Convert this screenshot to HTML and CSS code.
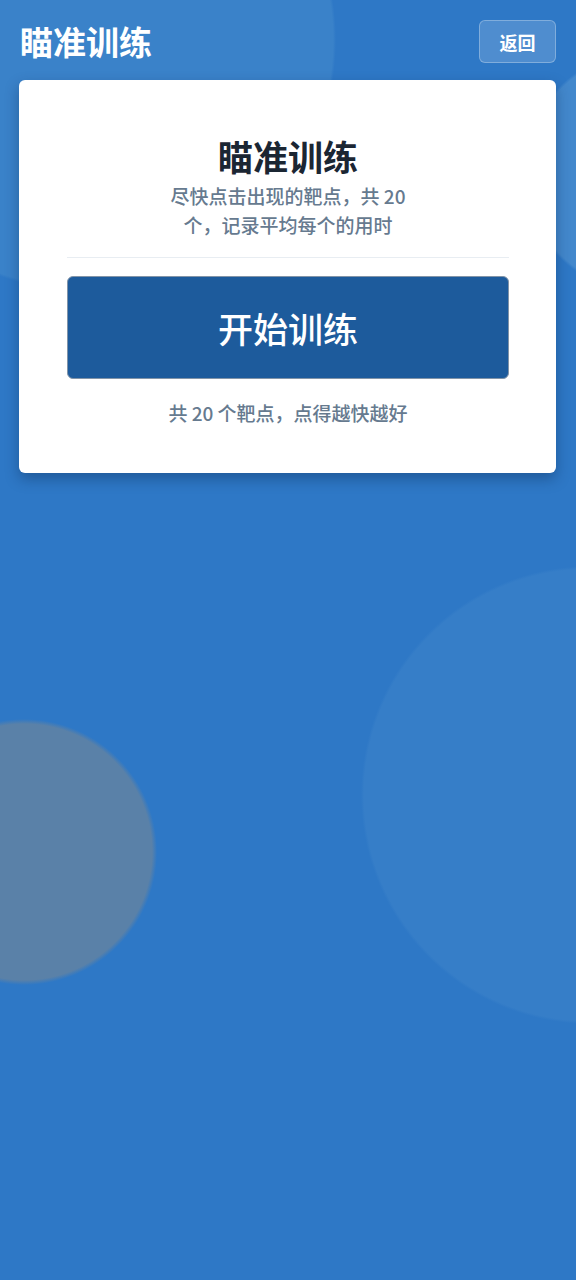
FILE: index.html
```html
<!DOCTYPE html>
<html lang="zh">
<head>
<meta charset="utf-8">
<title>瞄准训练</title>
<link rel="stylesheet" href="styles.css">
</head>
<body>
<div class="page">
  <header class="topbar">
    <h1 class="app-title">瞄准训练</h1>
    <button class="back-btn">返回</button>
  </header>
  <main class="card">
    <h2 class="card-title">瞄准训练</h2>
    <p class="card-desc">尽快点击出现的靶点，共 20 个，记录平均每个的用时</p>
    <div class="divider"></div>
    <button class="start-btn">开始训练</button>
    <p class="card-note">共 20 个靶点，点得越快越好</p>
  </main>
</div>
</body>
</html>
```

FILE: styles.css
```css
* { box-sizing: border-box; }
html, body { margin: 0; padding: 0; }
body {
  min-height: 1280px;
  font-family: "Noto Sans CJK SC", "Noto Sans", sans-serif;
  background-color: #2e78c6;
  background-image:
    radial-gradient(circle 250px at 85px 40px, #3a82c9 248px, rgba(58,130,201,0) 251px),
    radial-gradient(circle 120px at 645px 172px, #4388cc 118px, rgba(67,136,204,0) 121px),
    radial-gradient(circle 228px at 590px 795px, #367ec8 226px, rgba(54,126,200,0) 229px),
    radial-gradient(circle 132px at 24px 852px, #5a81a8 128px, rgba(90,129,168,0) 133px);
  background-repeat: no-repeat;
}
.page {
  padding: 20px 20px 0 19px;
}
.topbar {
  display: flex;
  justify-content: space-between;
  align-items: center;
  height: 43px;
}
.app-title {
  margin: 0;
  color: #ffffff;
  font-size: 33px;
  font-weight: 700;
  line-height: 43px;
  padding-left: 1px;
}
.back-btn {
  width: 77px;
  height: 43px;
  border-radius: 6px;
  border: 1px solid rgba(255,255,255,0.28);
  background: rgba(255,255,255,0.16);
  color: #ffffff;
  font-family: inherit;
  font-size: 18px;
  font-weight: 700;
  padding: 0;
}
.card {
  margin-top: 17px;
  background: #ffffff;
  border-radius: 6px;
  box-shadow: 0 6px 14px rgba(10,40,80,0.38);
  padding: 53px 47px 47px 48px;
  display: flex;
  flex-direction: column;
  align-items: center;
  text-align: center;
}
.card-title {
  margin: 0;
  font-size: 35px;
  font-weight: 700;
  line-height: 46px;
  color: #1b2633;
}
.card-desc {
  margin: 2px 0 0;
  max-width: 250px;
  font-size: 19px;
  font-weight: 500;
  line-height: 29px;
  color: #667a8f;
}
.divider {
  align-self: stretch;
  height: 1px;
  background: #e8edf2;
  margin-top: 18px;
}
.start-btn {
  align-self: stretch;
  margin-top: 18px;
  height: 103px;
  border-radius: 6px;
  border: 1px solid #8294a8;
  background: #1d5b9c;
  color: #ffffff;
  font-family: inherit;
  font-size: 35px;
  font-weight: 500;
  padding: 0;
}
.card-note {
  margin: 21px 0 0;
  font-size: 19px;
  font-weight: 500;
  line-height: 26px;
  color: #667a8f;
}
```
